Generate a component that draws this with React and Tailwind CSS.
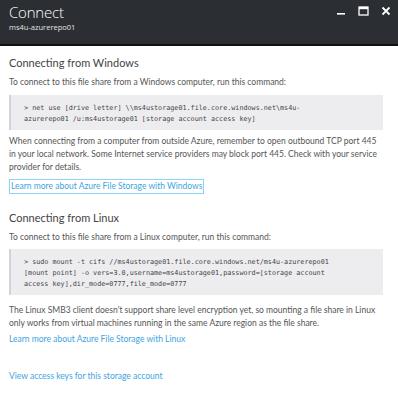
export default function App() {
  const sans = { fontFamily: 'Lato, "Open Sans", sans-serif' };
  const mono = { fontFamily: '"DejaVu Sans Mono", monospace' };
  return (
    <div className="w-[398px] h-[400px] bg-white overflow-hidden" style={sans}>
      <div className="h-[46px] bg-[#2b2e33] border-b-2 border-[#111214] flex justify-between pl-[9px] pr-[7px]">
        <div className="pt-[2px]" style={{ fontFamily: '"Open Sans", sans-serif' }}>
          <div className="text-[15px] leading-[20px] font-light text-white tracking-[-0.2px]">Connect</div>
          <div className="text-[7.5px] leading-[10px] text-[#e4e4e4]">ms4u-azurerepo01</div>
        </div>
        <div className="flex items-start gap-[12px] pt-[6px]">
          <svg width="10" height="10" viewBox="0 0 10 10"><rect x="1" y="7" width="8" height="1.6" fill="#fff" /></svg>
          <svg width="11" height="10" viewBox="0 0 11 10"><rect x="1" y="1" width="9" height="8" fill="none" stroke="#fff" strokeWidth="1.3" /><rect x="1" y="1" width="9" height="2.2" fill="#fff" /></svg>
          <svg width="10" height="10" viewBox="0 0 10 10"><path d="M1.5 1.5 L8.5 8.5 M8.5 1.5 L1.5 8.5" stroke="#fff" strokeWidth="1.8" /></svg>
        </div>
      </div>
      <div className="px-[9px] text-[#555] text-[8.5px] leading-[13px]">
        <div className="text-[11px] leading-[16px] text-[#444] mt-[9px]">Connecting from Windows</div>
        <div className="mt-[5px]">To connect to this file share from a Windows computer, run this command:</div>
        <div className="mt-[6px] w-[374px] bg-[#ededf0] border-l-2 border-[#d2d2d8] pl-[13px] pr-[8px] pt-[8px] pb-[5px] text-[#444] text-[6.75px] leading-[11px]" style={mono}>
          <div>&gt; net use [drive letter] \\ms4ustorage01.file.core.windows.net\ms4u-</div>
          <div>azurerepo01 /u:ms4ustorage01 [storage account access key]</div>
        </div>
        <div className="mt-[5px] pr-[4px]">When connecting from a computer from outside Azure, remember to open outbound TCP port 445 in your local network. Some Internet service providers may block port 445. Check with your service provider for details.</div>
        <div className="mt-[5px]">
          <span className="inline-block border border-[#8fd3f5] px-[1px] text-[#3ea4e0]">Learn more about Azure File Storage with Windows</span>
        </div>
        <div className="text-[11px] leading-[16px] text-[#444] mt-[16px]">Connecting from Linux</div>
        <div className="mt-[5px]">To connect to this file share from a Linux computer, run this command:</div>
        <div className="mt-[5px] w-[374px] bg-[#ededf0] border-l-2 border-[#d2d2d8] pl-[13px] pr-[8px] pt-[8px] pb-[5px] text-[#444] text-[6.75px] leading-[11px]" style={mono}>
          <div>&gt; sudo mount -t cifs //ms4ustorage01.file.core.windows.net/ms4u-azurerepo01</div>
          <div>[mount point] -o vers=3.0,username=ms4ustorage01,password=[storage account</div>
          <div>access key],dir_mode=0777,file_mode=0777</div>
        </div>
        <div className="mt-[9px] pr-[4px]">The Linux SMB3 client doesn't support share level encryption yet, so mounting a file share in Linux only works from virtual machines running in the same Azure region as the file share.</div>
        <div className="mt-[3px] text-[#3ea4e0]">Learn more about Azure File Storage with Linux</div>
        <div className="mt-[24px] text-[#3ea4e0]">View access keys for this storage account</div>
      </div>
    </div>
  );
}
